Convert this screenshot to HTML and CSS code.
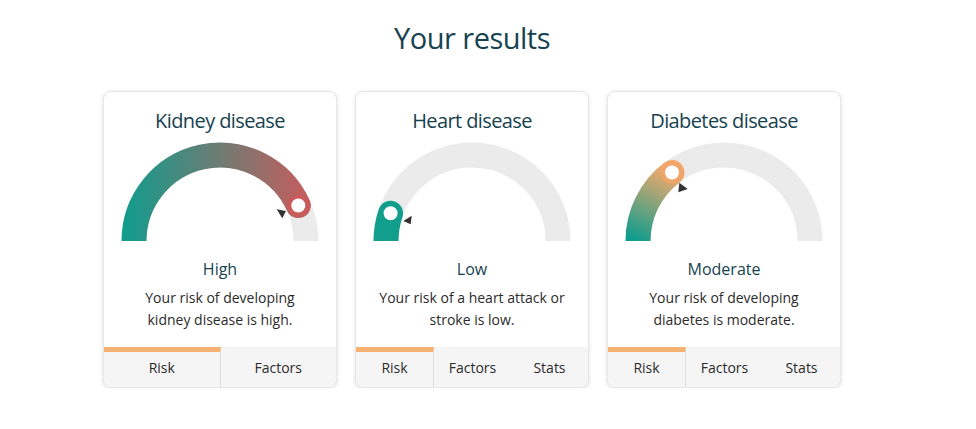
FILE: index.html
```html
<!DOCTYPE html>
<html lang="en">
<head>
  <meta charset="UTF-8" />
  <meta name="viewport" content="width=device-width, initial-scale=1.0"/>
  <title>Your results</title>
  <link rel="stylesheet" href="styles.css">
</head>
<body>

<div class="page">
  <h1>Your results</h1>

  <div class="cards">

    <div class="card">
      <h2>Kidney disease</h2>
      <svg class="gauge" width="200" height="100" viewBox="0 0 200 100">
        <defs>
          <linearGradient id="g-kidney" gradientUnits="userSpaceOnUse" x1="2" y1="0" x2="198" y2="0">
            <stop offset="0" stop-color="#0f9d8d"/>
            <stop offset="1" stop-color="#cf5a5a"/>
          </linearGradient>
        </defs>
        <path class="track" d="M 14 100 A 86 86 0 0 1 186 100"/>
        <path class="fill" stroke="url(#g-kidney)" d="M 14 100 A 86 86 0 0 1 178.3 64.5"/>
        <circle class="knob" stroke="#c95b5a" cx="178.3" cy="64.5" r="9"/>
        <polygon class="pointer" points="156.7,68.3 166,70 162.3,77.3"/>
      </svg>
      <div class="level">High</div>
      <p class="desc">Your risk of developing<br>kidney disease is high.</p>
      <div class="tabs">
        <div class="tab active">Risk</div>
        <div class="tab">Factors</div>
      </div>
    </div>

    <div class="card">
      <h2>Heart disease</h2>
      <svg class="gauge" width="200" height="100" viewBox="0 0 200 100">
        <path class="track" d="M 14 100 A 86 86 0 0 1 186 100"/>
        <path class="fill" stroke="#129e8c" d="M 14 100 A 86 86 0 0 1 18.6 72.3"/>
        <circle class="knob" stroke="#129e8c" cx="18.6" cy="72.3" r="9"/>
        <polygon class="pointer" points="31.3,80 39.7,74.7 38.7,83.3"/>
      </svg>
      <div class="level">Low</div>
      <p class="desc">Your risk of a heart attack or<br>stroke is low.</p>
      <div class="tabs">
        <div class="tab active">Risk</div>
        <div class="tab">Factors</div>
        <div class="tab">Stats</div>
      </div>
    </div>

    <div class="card">
      <h2>Diabetes disease</h2>
      <svg class="gauge" width="200" height="100" viewBox="0 0 200 100">
        <defs>
          <linearGradient id="g-diabetes" gradientUnits="userSpaceOnUse" x1="14" y1="100" x2="48" y2="31.5">
            <stop offset="0" stop-color="#0f9d8d"/>
            <stop offset="1" stop-color="#f2a96b"/>
          </linearGradient>
        </defs>
        <path class="track" d="M 14 100 A 86 86 0 0 1 186 100"/>
        <path class="fill" stroke="url(#g-diabetes)" d="M 14 100 A 86 86 0 0 1 48 31.5"/>
        <circle class="knob" stroke="#f2a56a" cx="48" cy="31.5" r="9"/>
        <polygon class="pointer" points="55.3,41.7 54.3,51.3 63.7,48"/>
      </svg>
      <div class="level">Moderate</div>
      <p class="desc">Your risk of developing<br>diabetes is moderate.</p>
      <div class="tabs">
        <div class="tab active">Risk</div>
        <div class="tab">Factors</div>
        <div class="tab">Stats</div>
      </div>
    </div>

  </div>
</div>

</body>
</html>
```

FILE: styles.css
```css
body {
  font-family: "Open Sans", "Noto Sans", Arial, sans-serif;
  margin: 0; padding: 0;
  background: #fff;
  color: #333;
}
.page {
  width: 944px;
  text-align: center;
}
h1 {
  margin: 0;
  padding-top: 18px;
  font-size: 29px;
  line-height: 40px;
  font-weight: normal;
  color: #17424f;
  letter-spacing: -0.5px;
}
.cards {
  display: flex;
  justify-content: center;
  gap: 18px;
  margin-top: 33px;
}
.card {
  width: 234px;
  background: white;
  border: 1px solid #e6e6e6;
  border-radius: 8px;
  box-shadow: 0 1px 4px rgba(0,0,0,0.12);
  overflow: hidden;
  box-sizing: border-box;
  display: flex;
  flex-direction: column;
  align-items: center;
}
.card h2 {
  margin: 0;
  padding-top: 15px;
  font-size: 20px;
  line-height: 28px;
  font-weight: normal;
  color: #17424f;
  letter-spacing: -0.6px;
}
.gauge {
  display: block;
  margin-top: 6px;
}
.track {
  fill: none;
  stroke: #ebebeb;
  stroke-width: 25;
}
.fill {
  fill: none;
  stroke-width: 25;
  stroke-linecap: round;
}
.knob {
  fill: white;
  stroke-width: 4;
}
.pointer {
  fill: #333;
}
.level {
  margin-top: 16px;
  font-size: 16px;
  line-height: 24px;
  color: #17424f;
}
.desc {
  margin: 6px 0 0;
  font-size: 14px;
  line-height: 22px;
  color: #2b2b2b;
}
.tabs {
  margin-top: 16px;
  width: 100%;
  display: flex;
  background: #f5f5f5;
}
.tab {
  flex: 1;
  height: 40px;
  box-sizing: border-box;
  border-top: 5px solid transparent;
  padding-top: 5px;
  font-size: 14px;
  line-height: 22px;
  color: #2b2b2b;
}
.tab.active {
  border-top-color: #f6b173;
  border-right: 1px solid #dedede;
}
```
